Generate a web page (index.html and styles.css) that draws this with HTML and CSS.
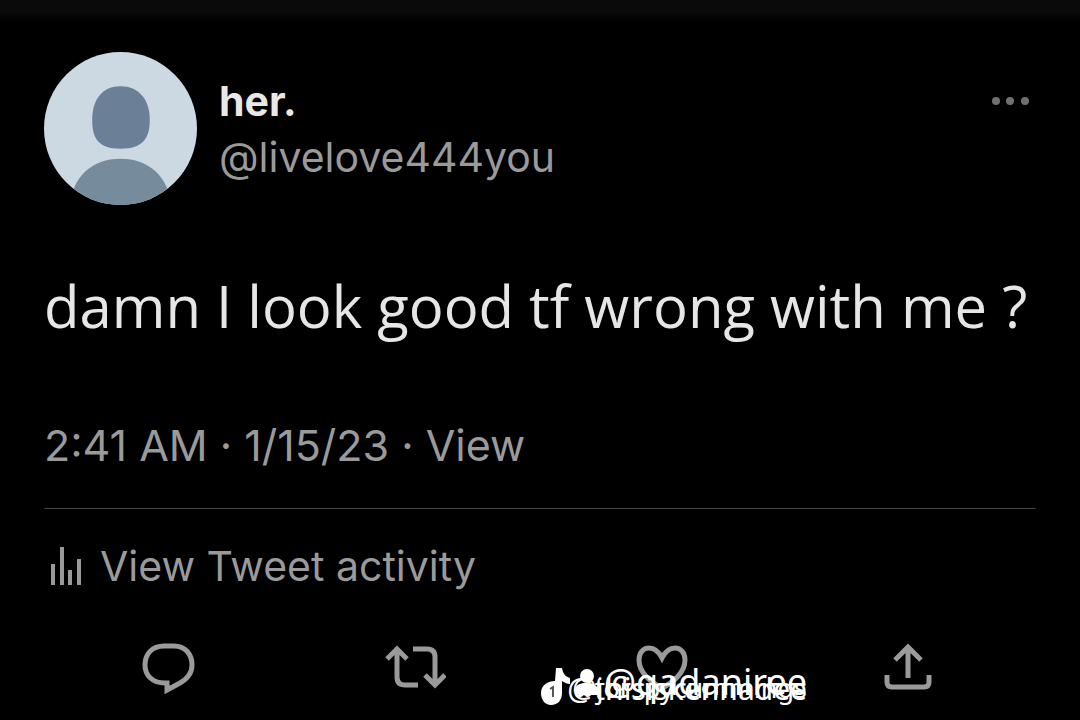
FILE: index.html
```html
<!DOCTYPE html>
<html lang="en">
<head>
    <meta charset="UTF-8">
    <meta name="viewport" content="width=device-width, initial-scale=1.0">
    <title>Tweet</title>
    <link rel="stylesheet" href="styles.css">
</head>
<body>

    <article class="tweet">
        <!-- Author -->
        <header class="author">
            <svg class="avatar" viewBox="0 0 152 152" aria-hidden="true">
                <defs>
                    <clipPath id="avatarClip"><circle cx="76" cy="76" r="76"/></clipPath>
                </defs>
                <g clip-path="url(#avatarClip)">
                    <rect class="avatar-bg" width="152" height="152"/>
                    <path class="avatar-head" d="M76 34C94 34 104 47 105 64C106 86 98 96 76 96C54 96 47 86 48 64C49 47 58 34 76 34Z"/>
                    <path class="avatar-body" d="M26 152C28 124 48 106 76 106C104 106 124 124 126 152Z"/>
                </g>
            </svg>
            <div class="names">
                <h1 class="name">her.</h1>
                <a class="handle" href="#profile">@livelove444you</a>
            </div>
            <button class="more" aria-label="More">
                <svg width="38" height="10" viewBox="0 0 38 10">
                    <circle cx="5" cy="5" r="4"/>
                    <circle cx="19" cy="5" r="4"/>
                    <circle cx="34" cy="5" r="4"/>
                </svg>
            </button>
        </header>

        <p class="text">damn I look good tf wrong with me ?</p>

        <p class="meta">2:41 AM · 1/15/23 · View</p>

        <a class="activity" href="#activity">
            <svg width="32" height="38" viewBox="0 0 32 38" aria-hidden="true">
                <path d="M3 17v21M12 0v38M20 23v15M29 12v26"/>
            </svg>
            View Tweet activity
        </a>

        <!-- Action buttons -->
        <div class="actions">
            <button aria-label="Reply">
                <svg width="60" height="56" viewBox="0 0 60 56">
                    <path d="M25 6H35C47 6 53 15 53 25C53 34 48 39 41 43L28 50V43H26C13 43 6 35 6 25C6 14 13 6 25 6Z"/>
                </svg>
            </button>
            <button aria-label="Retweet">
                <svg width="62" height="56" viewBox="0 0 62 56">
                    <path d="M3 19L13 9L23 19M13 10V37Q13 45 21 45H34M29 9H43Q51 9 51 17V44M41 35L51 45L61 35"/>
                </svg>
            </button>
            <button aria-label="Like">
                <svg width="60" height="56" viewBox="0 0 60 56">
                    <path d="M30 18C26 10 22 8 17 8C11 8 7 13 7 20C7 32 18 42 30 48C42 42 53 32 53 20C53 13 49 8 43 8C38 8 34 10 30 18Z"/>
                </svg>
            </button>
            <button aria-label="Share">
                <svg width="60" height="56" viewBox="0 0 60 56">
                    <path d="M18 20L31 7L44 20M31 8V38M10 35V42Q10 47 15 47H47Q52 47 52 42V35"/>
                </svg>
            </button>
        </div>

        <!-- Video watermarks -->
        <div class="watermark">
            <svg width="60" height="40" viewBox="0 0 60 40" aria-hidden="true">
                <path class="mark" d="M15 3H21C22 9 25 12 29 13V19C26 19 24 18 21 16V28C21 35 17 40 10 40C4 40 0 35 0 28C0 20 7 16 14 16Z"/>
                <path class="mark-line" d="M9 24L12 22V32"/>
                <circle class="mark" cx="46" cy="11" r="7"/>
                <path class="mark" d="M34 26C35 19 40 18 46 18C54 18 58 22 59 30H38Z"/>
            </svg>
            <span class="mark-large">@qadaniree</span>
            <span class="mark-medium">@thisiskennadee</span>
            <span class="mark-small">@jorspycummings</span>
        </div>
    </article>

</body>
</html>
```
FILE: styles.css
```css
html {
    background: #000;
}

body {
    font-family: Inter, "Liberation Sans", sans-serif;
    margin: 0;
    min-height: 100vh;
    background: linear-gradient(#0a0a0a 12px, #000 22px) no-repeat;
    color: #9a9a9a;
    font-size: 41px;
    line-height: 56px;
}

p, h1 {
    margin: 0;
}

a {
    color: inherit;
    text-decoration: none;
}

button {
    background: none;
    border: none;
    padding: 0;
    cursor: pointer;
}

svg {
    display: block;
}

.tweet {
    position: relative;
    padding: 52px 44px 0;
}

/* Author */
.author {
    display: flex;
    gap: 22px;
}

.avatar {
    width: 153px;
    height: 153px;
}

.avatar-bg {
    fill: #ccd9e3;
}

.avatar-head {
    fill: #6b7f96;
}

.avatar-body {
    fill: #768b9c;
}

.names {
    flex: 1;
    padding-top: 21px;
}

.name {
    color: #e8e8e6;
    font-size: 41px;
    font-weight: 700;
    line-height: 56px;
}

.handle {
    display: block;
}

.more {
    align-self: flex-start;
    margin-top: 44px;
    margin-right: 7px;
    fill: #707070;
}

/* Tweet body */
.text {
    margin-top: 65px;
    color: #e6e6e6;
    font-family: "Open Sans", sans-serif;
    font-size: 58px;
    line-height: 72px;
    white-space: nowrap;
}

.meta {
    margin-top: 75px;
    padding-bottom: 35px;
    border-bottom: 1px solid #444;
    font-size: 43px;
}

.activity {
    display: flex;
    align-items: center;
    gap: 18px;
    margin-top: 29px;
    padding-left: 6px;
}

.activity svg {
    fill: none;
    stroke: #9a9a9a;
    stroke-width: 4;
}

/* Actions */
.actions {
    display: flex;
    justify-content: space-between;
    margin-top: 46px;
    padding: 0 99px 0 95px;
}

.actions svg {
    fill: none;
    stroke: #9a9a9a;
    stroke-width: 5;
}

/* Watermarks */
.watermark {
    position: absolute;
    left: 541px;
    top: 665px;
    width: 266px;
    color: #fff;
    font-family: "Noto Sans", sans-serif;
    line-height: 40px;
}

.mark {
    fill: #fff;
}

.mark-line {
    fill: none;
    stroke: #555;
    stroke-width: 2;
}

.watermark span {
    position: absolute;
    right: 0;
}

.mark-large {
    top: -3px;
    font-size: 36px;
}

.mark-medium {
    top: 4px;
    font-size: 30px;
}

.mark-small {
    top: 3px;
    font-size: 27px;
}
```
